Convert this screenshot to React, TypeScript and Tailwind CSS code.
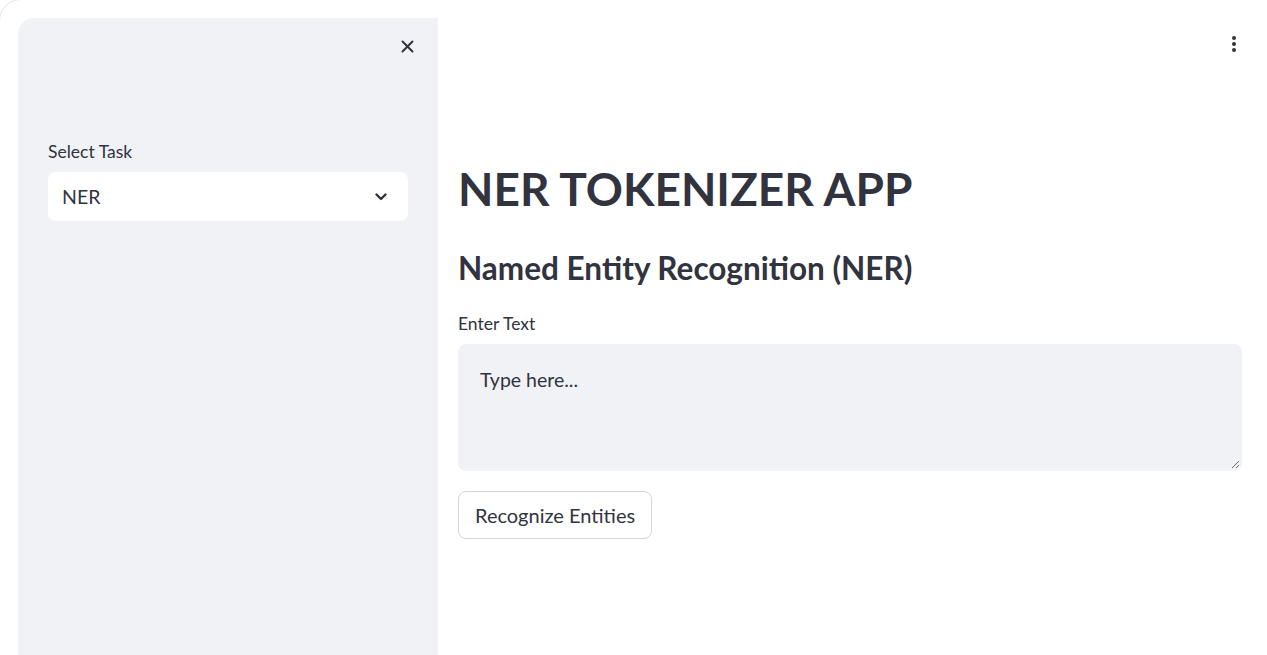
import React from "react";

export default function App() {
  return (
    <div
      className="relative w-[1267px] h-[655px] overflow-hidden bg-white text-[#31333f]"
      style={{ fontFamily: "Lato, 'Noto Sans', sans-serif" }}
    >
      <div className="pointer-events-none absolute left-[-1px] top-[-1px] w-[1400px] h-[800px] rounded-tl-[22px] border border-[#e3e4e8]" />
      <div className="flex h-full pl-[18px] pt-[18px]">
        <aside className="w-[420px] shrink-0 h-full bg-[#f0f2f6] rounded-tl-[16px] flex flex-col">
          <div className="flex justify-end pt-[22px] pr-[24px]">
            <svg width="13" height="13" viewBox="0 0 13 13" fill="none" stroke="#31333f" strokeWidth="2" strokeLinecap="round">
              <path d="M1.5 1.5l10 10M11.5 1.5l-10 10" />
            </svg>
          </div>
          <div className="px-[30px] flex flex-col">
            <div className="mt-[87px] text-[17.5px] leading-[24px]">Select Task</div>
            <div className="mt-[8px] h-[49px] bg-white rounded-[8px] flex items-center justify-between pl-[14px] pr-[21px]">
              <span className="text-[19.5px]">NER</span>
              <svg width="12" height="8" viewBox="0 0 12 8" fill="none" stroke="#31333f" strokeWidth="2.4" strokeLinecap="round" strokeLinejoin="round">
                <path d="M1.5 1.5L6 6l4.5-4.5" />
              </svg>
            </div>
          </div>
        </aside>
        <main className="flex-1 flex flex-col pl-[20px] pr-[25px] relative">
          <div className="absolute right-[31px] top-[18px] flex flex-col gap-[2px] items-center">
            <span className="w-[4px] h-[4px] rounded-full bg-[#31333f]" />
            <span className="w-[4px] h-[4px] rounded-full bg-[#31333f]" />
            <span className="w-[4px] h-[4px] rounded-full bg-[#31333f]" />
          </div>
          <h1 className="mt-[141px] text-[46px] leading-[60px] font-bold">NER TOKENIZER APP</h1>
          <h2 className="mt-[29px] text-[31.5px] leading-[40px] font-bold">Named Entity Recognition (NER)</h2>
          <div className="mt-[24px] text-[17.5px] leading-[24px]">Enter Text</div>
          <div className="mt-[8px] relative h-[127px] bg-[#f0f2f6] rounded-[8px] px-[22px] pt-[22px]">
            <span className="text-[19.5px] leading-[28px] text-[#31333f]">Type here...</span>
            <svg className="absolute right-[2px] bottom-[2px]" width="10" height="10" viewBox="0 0 10 10" stroke="#6b6d76" strokeWidth="1">
              <path d="M9 2L2 9M9 6L6 9" />
            </svg>
          </div>
          <div className="mt-[20px]">
            <button className="h-[48px] px-[16px] rounded-[8px] border border-[#d5d6da] bg-white text-[20px] leading-[28px]">
              Recognize Entities
            </button>
          </div>
        </main>
      </div>
    </div>
  );
}
